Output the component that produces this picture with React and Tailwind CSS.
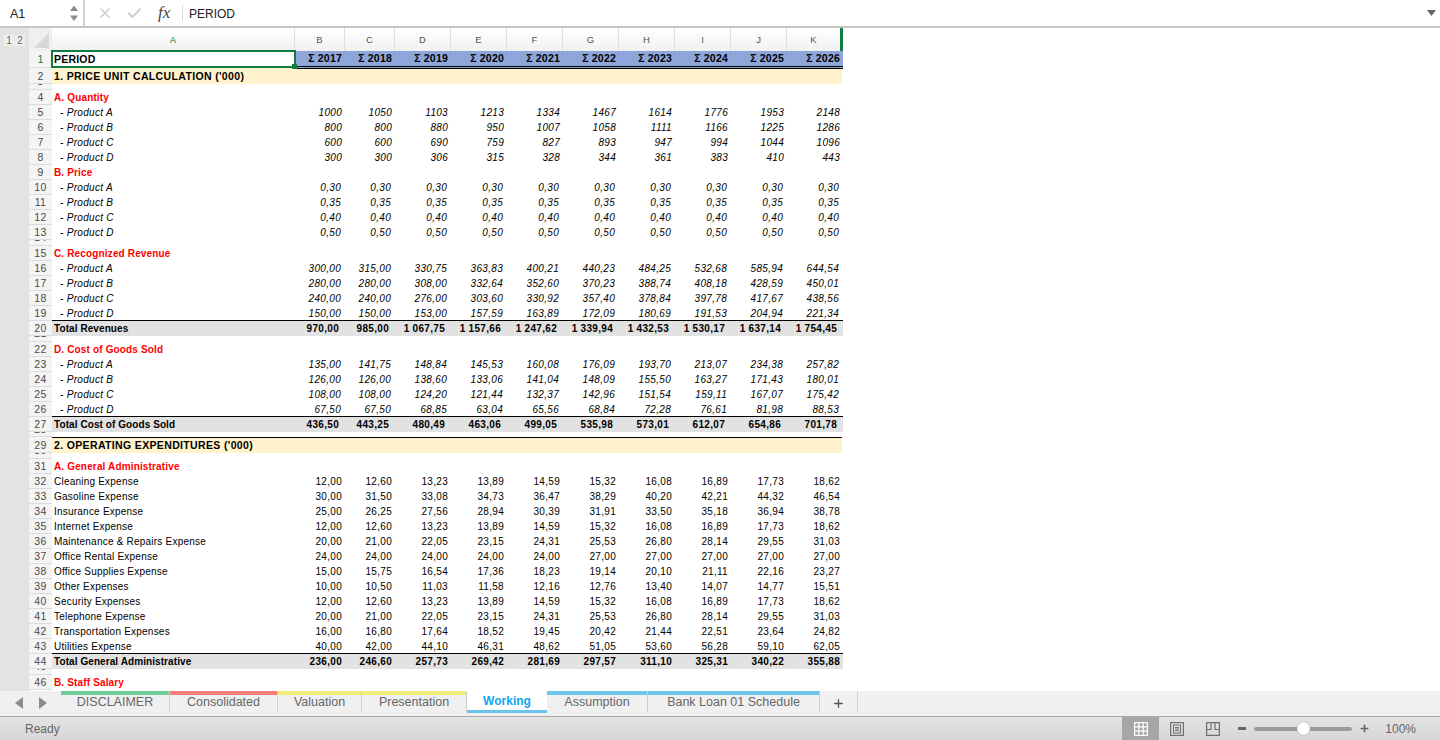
import React from "react";
import { Check, X, Plus } from "lucide-react";

const font = "font-['Liberation_Sans',Arial,sans-serif]";

const same = (v) => Array(10).fill(v);
const base = "12,00 12,60 13,23 13,89 14,59 15,32 16,08 16,89 17,73 18,62".split(" ");
const repairs = "20,00 21,00 22,05 23,15 24,31 25,53 26,80 28,14 29,55 31,03".split(" ");
const nums = (s) => s.split("|");

// row types: section, head (red), int / item (italic), plain, total, gap
const rows = [
  { n: 2, t: "section", label: "1. PRICE UNIT CALCULATION ('000)" },
  { n: 3, t: "gap", h: "h-[6px]" },
  { n: 4, t: "head", label: "A. Quantity" },
  { n: 5, t: "int", label: "- Product A", v: "1000 1050 1103 1213 1334 1467 1614 1776 1953 2148".split(" ") },
  { n: 6, t: "int", label: "- Product B", v: "800 800 880 950 1007 1058 1111 1166 1225 1286".split(" ") },
  { n: 7, t: "int", label: "- Product C", v: "600 600 690 759 827 893 947 994 1044 1096".split(" ") },
  { n: 8, t: "int", label: "- Product D", v: "300 300 306 315 328 344 361 383 410 443".split(" ") },
  { n: 9, t: "head", label: "B. Price" },
  { n: 10, t: "item", label: "- Product A", v: same("0,30") },
  { n: 11, t: "item", label: "- Product B", v: same("0,35") },
  { n: 12, t: "item", label: "- Product C", v: same("0,40") },
  { n: 13, t: "item", label: "- Product D", v: same("0,50") },
  { n: 14, t: "gap", h: "h-[6px]" },
  { n: 15, t: "head", label: "C. Recognized Revenue" },
  { n: 16, t: "item", label: "- Product A", v: "300,00 315,00 330,75 363,83 400,21 440,23 484,25 532,68 585,94 644,54".split(" ") },
  { n: 17, t: "item", label: "- Product B", v: "280,00 280,00 308,00 332,64 352,60 370,23 388,74 408,18 428,59 450,01".split(" ") },
  { n: 18, t: "item", label: "- Product C", v: "240,00 240,00 276,00 303,60 330,92 357,40 378,84 397,78 417,67 438,56".split(" ") },
  { n: 19, t: "item", label: "- Product D", v: "150,00 150,00 153,00 157,59 163,89 172,09 180,69 191,53 204,94 221,34".split(" ") },
  { n: 20, t: "total", pr: "pr-[6px]", label: "Total Revenues", v: nums("970,00|985,00|1 067,75|1 157,66|1 247,62|1 339,94|1 432,53|1 530,17|1 637,14|1 754,45") },
  { n: 21, t: "gap", h: "h-[6px]" },
  { n: 22, t: "head", label: "D. Cost of Goods Sold" },
  { n: 23, t: "item", label: "- Product A", v: "135,00 141,75 148,84 145,53 160,08 176,09 193,70 213,07 234,38 257,82".split(" ") },
  { n: 24, t: "item", label: "- Product B", v: "126,00 126,00 138,60 133,06 141,04 148,09 155,50 163,27 171,43 180,01".split(" ") },
  { n: 25, t: "item", label: "- Product C", v: "108,00 108,00 124,20 121,44 132,37 142,96 151,54 159,11 167,07 175,42".split(" ") },
  { n: 26, t: "item", label: "- Product D", v: "67,50 67,50 68,85 63,04 65,56 68,84 72,28 76,61 81,98 88,53".split(" ") },
  { n: 27, t: "total", pr: "pr-[6px]", label: "Total Cost of Goods Sold", v: "436,50 443,25 480,49 463,06 499,05 535,98 573,01 612,07 654,86 701,78".split(" ") },
  { n: 28, t: "gap", h: "h-[5px]" },
  { n: 29, t: "section", top: true, label: "2. OPERATING EXPENDITURES ('000)" },
  { n: 30, t: "gap", h: "h-[6px]" },
  { n: 31, t: "head", label: "A. General Administrative" },
  { n: 32, t: "plain", label: "Cleaning Expense", v: base },
  { n: 33, t: "plain", label: "Gasoline Expense", v: "30,00 31,50 33,08 34,73 36,47 38,29 40,20 42,21 44,32 46,54".split(" ") },
  { n: 34, t: "plain", label: "Insurance Expense", v: "25,00 26,25 27,56 28,94 30,39 31,91 33,50 35,18 36,94 38,78".split(" ") },
  { n: 35, t: "plain", label: "Internet Expense", v: base },
  { n: 36, t: "plain", label: "Maintenance & Repairs Expense", v: repairs },
  { n: 37, t: "plain", label: "Office Rental Expense", v: "24,00 24,00 24,00 24,00 24,00 27,00 27,00 27,00 27,00 27,00".split(" ") },
  { n: 38, t: "plain", label: "Office Supplies Expense", v: "15,00 15,75 16,54 17,36 18,23 19,14 20,10 21,11 22,16 23,27".split(" ") },
  { n: 39, t: "plain", label: "Other Expenses", v: "10,00 10,50 11,03 11,58 12,16 12,76 13,40 14,07 14,77 15,51".split(" ") },
  { n: 40, t: "plain", label: "Security Expenses", v: base },
  { n: 41, t: "plain", label: "Telephone Expense", v: repairs },
  { n: 42, t: "plain", label: "Transportation Expenses", v: "16,00 16,80 17,64 18,52 19,45 20,42 21,44 22,51 23,64 24,82".split(" ") },
  { n: 43, t: "plain", label: "Utilities Expense", v: "40,00 42,00 44,10 46,31 48,62 51,05 53,60 56,28 59,10 62,05".split(" ") },
  { n: 44, t: "total", pr: "pr-[3px]", label: "Total General Administrative", v: "236,00 246,60 257,73 269,42 281,69 297,57 311,10 325,31 340,22 355,88".split(" ") },
  { n: 45, t: "gap", h: "h-[6px]" },
  { n: 46, t: "head", label: "B. Staff Salary" },
];

const gridCols = "grid grid-cols-[243px_50px_50px_repeat(8,56px)]";
const columns = ["B", "C", "D", "E", "F", "G", "H", "I", "J", "K"];
const years = [2017, 2018, 2019, 2020, 2021, 2022, 2023, 2024, 2025, 2026];

const RowNum = ({ n, h = "h-[15px]", active, gap }) => (
  <div className={`${h} w-[23px] shrink-0 flex ${gap ? "items-start" : "items-center"} justify-center overflow-hidden bg-[#f4f4f4] border-b border-[#dcdcdc] text-[10.5px] tracking-[0.4px] ${active ? "text-[#107c41]" : "text-[#4a4a4a]"}`}>
    <span className={gap ? "leading-[15px] -mt-[10px]" : "leading-[14px]"}>{n}</span>
  </div>
);

const SheetRow = ({ row }) => {
  if (row.t === "gap") {
    return (
      <div className="flex">
        <RowNum n={row.n} h={row.h} gap />
        <div className={row.h} />
      </div>
    );
  }
  if (row.t === "section") {
    return (
      <div className="flex h-[16px]">
        <RowNum n={row.n} h="h-[16px]" />
        <div className={`w-[790px] bg-[#fff2cc] pl-[2px] text-[10.5px] font-bold text-black tracking-[0.35px] ${row.top ? "border-t border-black leading-[15px]" : "leading-[16px]"}`}>
          {row.label}
        </div>
      </div>
    );
  }
  if (row.t === "head") {
    return (
      <div className="flex">
        <RowNum n={row.n} />
        <div className="pl-[2px] text-[10px] leading-[15px] font-bold text-[#ff0000] tracking-[0.15px]">{row.label}</div>
      </div>
    );
  }
  const isTotal = row.t === "total";
  const italic = row.t === "item" || row.t === "int";
  let label = "pl-[2px] text-black tracking-[0.22px]";
  let cell = "text-right text-black";
  if (isTotal) {
    label = "pl-[2px] text-black font-bold tracking-[0.08px]";
    cell += ` font-bold ${row.pr}`;
  } else if (row.t === "item") {
    label = "pl-[8px] italic text-black";
    cell += " italic pr-[4px]";
  } else if (row.t === "int") {
    label = "pl-[8px] italic text-black";
    cell += " italic pr-[3px]";
  } else {
    cell += " pr-[3px]";
  }
  return (
    <div className="flex h-[15px]">
      <RowNum n={row.n} />
      <div className={`${gridCols} text-[10px] leading-[15px] tracking-[0.3px] ${isTotal ? "h-[16px] -mt-px bg-[#e2e2e2] border-t border-black" : "h-[15px]"} ${italic ? "" : ""}`}>
        <div className={label}>{row.label}</div>
        {row.v.map((x, i) => (
          <div key={i} className={`${cell} whitespace-nowrap`}>{x}</div>
        ))}
      </div>
    </div>
  );
};

const tabs = [
  { name: "DISCLAIMER", w: "w-[109px]", bar: "bg-[#6fcf97]" },
  { name: "Consolidated", w: "w-[108px]", bar: "bg-[#f47c7c]" },
  { name: "Valuation", w: "w-[84px]", bar: "bg-[#f0ee76]" },
  { name: "Presentation", w: "w-[105px]", bar: "bg-[#f0ee76]" },
  { name: "Working", w: "w-[80px]", active: true },
  { name: "Assumption", w: "w-[101px]", bar: "bg-[#6cc5ea]" },
  { name: "Bank Loan 01 Schedule", w: "w-[172px]", bar: "bg-[#6cc5ea]" },
];

export default function App() {
  return (
    <div className={`${font} w-[1440px] h-[740px] overflow-hidden bg-white flex flex-col`}>
      {/* formula bar */}
      <div className="h-[26px] flex items-center bg-white shrink-0">
        <div className="w-[85px] h-[26px] flex items-center justify-between border-r-2 border-[#cfcfcf] pl-[10px] pr-[3px] text-[12.5px] text-[#222]">
          <span className="pt-[2px]">A1</span>
          <svg width="12" height="20" viewBox="0 0 12 20">
            <path d="M6 2.5 L10 8 H2 Z" fill="#8a8a8a" />
            <path d="M6 18 L10 12.5 H2 Z" fill="#8a8a8a" />
          </svg>
        </div>
        <X size={16} strokeWidth={2.6} className="ml-[12px] text-[#cfcfcf]" />
        <Check size={17} strokeWidth={3} className="ml-[13px] text-[#cfcfcf]" />
        <span className="ml-[15px] w-[18px] font-['Liberation_Serif',serif] italic text-[17px] text-[#444]">fx</span>
        <div className="ml-[6px] w-px h-[16px] bg-[#d9d9d9]" />
        <span className="ml-[6px] pt-[2px] text-[12px] text-[#222]">PERIOD</span>
        <svg width="9" height="6" viewBox="0 0 9 6" className="ml-auto mr-[4px]"><path d="M0 0 H9 L4.5 6 Z" fill="#666" /></svg>
      </div>
      <div className="h-[2px] shrink-0 bg-[#c6c6c6]" />

      {/* sheet */}
      <div className="flex-1 flex min-h-0">
        <div className="w-[29px] shrink-0 bg-[#e3e3e3] pt-[7px] pl-[4px]">
          <div className="flex gap-px text-[10px] leading-[11px] text-[#666]">
            <span className="w-[10px] text-center bg-[#efefef]">1</span>
            <span className="w-[10px] text-center bg-[#efefef]">2</span>
          </div>
        </div>
        <div className="flex-1 min-w-0">
          {/* column headers */}
          <div className="flex h-[23px]">
            <div className="w-[23px] bg-[#efefef] flex items-end justify-end pb-[3px] pr-[3px]">
              <svg width="15" height="15" viewBox="0 0 15 15"><path d="M15 0 V15 H0 Z" fill="#d8d8d8" /></svg>
            </div>
            <div className={`${gridCols} bg-gradient-to-b from-white to-[#f1f1f1] text-[9.5px] leading-[23px] text-center text-[#555]`}>
              <div className="border-r border-[#dedede] text-[#107c41]">A</div>
              {columns.map((c) => (
                <div key={c} className={c === "K" ? "border-r-[3px] border-[#107c41]" : "border-r border-[#dedede]"}>{c}</div>
              ))}
            </div>
          </div>
          {/* row 1 */}
          <div className="flex h-[17px]">
            <RowNum n={1} h="h-[17px]" active />
            <div className={`${gridCols} h-[18px] relative text-[10.5px] font-bold text-black leading-[14px] tracking-[0.2px]`}>
              <div className="relative z-10 self-start h-[18px] bg-white border-2 border-[#107c41] -mt-px -mx-px pl-[1px]">
                PERIOD
                <span className="absolute -right-[3px] -bottom-[3px] w-[5px] h-[5px] bg-[#107c41]" />
              </div>
              {years.map((y) => (
                <div key={y} className="bg-[#8ea6d9] border-b-[3px] border-double border-black text-right pr-[3px] whitespace-nowrap">
                  Σ {y}
                </div>
              ))}
            </div>
          </div>
          {rows.map((r) => (
            <SheetRow key={r.n} row={r} />
          ))}
        </div>
      </div>

      {/* tabs */}
      <div className="h-[26px] shrink-0 flex bg-[#f0f0f0] border-b border-[#a9a9a9] text-[12.5px] text-[#666]">
        <div className="w-[61px] flex items-center justify-center gap-[14px] pb-[2px]">
          <svg width="9" height="12" viewBox="0 0 9 12"><path d="M8 0 V12 L0 6 Z" fill="#8a8a8a" /></svg>
          <svg width="9" height="12" viewBox="0 0 9 12"><path d="M1 0 V12 L9 6 Z" fill="#8a8a8a" /></svg>
        </div>
        {tabs.map((t) =>
          t.active ? (
            <div key={t.name} className={`${t.w} h-[22px] bg-white border-b-[3px] border-[#6cc5ea] text-center font-bold text-[12px] text-[#12a5ee] leading-[21px]`}>
              {t.name}
            </div>
          ) : (
            <div key={t.name} className={`${t.w} h-[21px] text-center border-r border-[#cfcfcf] leading-[15px]`}>
              <div className={`h-[4px] ${t.bar}`} />
              {t.name}
            </div>
          )
        )}
        <div className="w-[38px] h-[21px] border-r border-[#cfcfcf] flex items-center justify-center">
          <Plus size={13} strokeWidth={2.5} className="text-[#555] mt-[3px]" />
        </div>
      </div>

      {/* status bar */}
      <div className="h-[23px] shrink-0 flex items-center bg-gradient-to-b from-[#e4e4e4] to-[#d6d6d6] text-[12px] text-[#666]">
        <span className="ml-[25px]">Ready</span>
        <div className="ml-auto w-[37px] h-[23px] bg-[#a6a6a6] flex items-center justify-center">
          <svg width="14" height="14" viewBox="0 0 14 14" fill="none" stroke="#fff" strokeWidth="1.2">
            <rect x="0.6" y="0.6" width="12.8" height="12.8" />
            <path d="M4.8 .6 V13.4 M9.2 .6 V13.4 M.6 4.8 H13.4 M.6 9.2 H13.4" />
          </svg>
        </div>
        <div className="w-[36px] flex justify-center">
          <svg width="14" height="14" viewBox="0 0 14 14" fill="none" stroke="#707070" strokeWidth="1.2">
            <rect x="0.6" y="0.6" width="12.8" height="12.8" />
            <rect x="3.5" y="3" width="7" height="8" strokeWidth="1" />
            <path d="M5 5.5 H9 M5 7 H9 M5 8.5 H9" strokeWidth="0.9" />
          </svg>
        </div>
        <div className="w-[36px] flex justify-center">
          <svg width="14" height="14" viewBox="0 0 14 14" fill="none" stroke="#707070" strokeWidth="1.2">
            <path d="M.6 .6 H13.4 V13.4 H.6 Z M.6 7.5 H5 V.6 M9 .6 V7.5 H13.4" />
          </svg>
        </div>
        <div className="ml-[7px] w-[8px] h-[3px] bg-[#666]" />
        <div className="relative ml-[8px] w-[98px] h-[4px] rounded-full bg-[#9c9c9c]">
          <span className="absolute left-[43px] -top-[5px] w-[13px] h-[13px] rounded-full bg-white shadow-[0_0_1px_#777]" />
        </div>
        <Plus size={11} strokeWidth={3.5} className="ml-[7px] text-[#666]" />
        <span className="ml-[15px] mr-[24px]">100%</span>
      </div>
    </div>
  );
}
